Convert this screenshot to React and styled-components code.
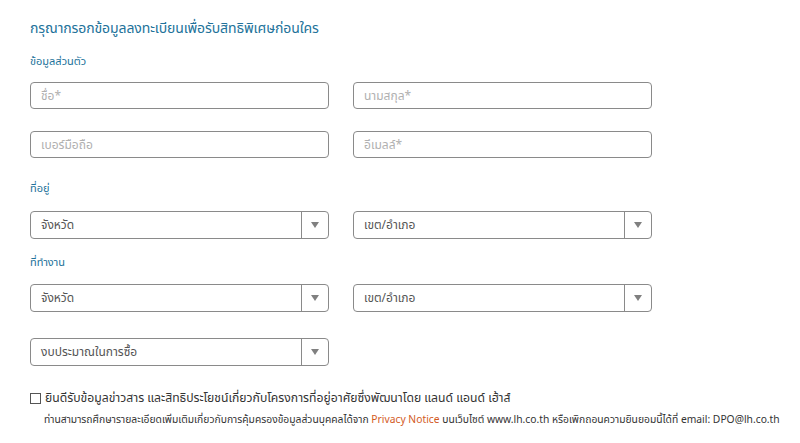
import React from 'react'
import styled, { createGlobalStyle } from 'styled-components'

const GlobalStyle = createGlobalStyle`
  body {
    margin: 0;
    background: #fff;
    font-family: "Noto Sans Thai", "Noto Sans", "Liberation Sans", sans-serif;
  }
`

const Page = styled.div`
  padding: 19px 0 0 30px;
  width: 800px;
  box-sizing: border-box;
`

const Title = styled.h2`
  margin: 0;
  font-size: 14px;
  font-weight: 400;
  color: #22729a;
  line-height: 20px;
  letter-spacing: -0.1px;
`

const SectionLabel = styled.div`
  font-size: 11px;
  color: #22729a;
  line-height: 14px;
  margin: ${(p) => p.$top || 0}px 0 ${(p) => p.$bottom || 0}px;
`

const Row = styled.div`
  display: grid;
  grid-template-columns: 299px 299px;
  column-gap: 24px;
  margin-top: ${(p) => p.$top || 0}px;
`

const Input = styled.div`
  height: 27px;
  box-sizing: border-box;
  border: 1px solid #8a8a8a;
  border-radius: 4px;
  padding: 0 10px;
  display: flex;
  align-items: center;
  font-size: 12px;
  color: #b0b0b0;
`

const SelectBox = styled.div`
  height: 28px;
  box-sizing: border-box;
  border: 1px solid #8a8a8a;
  border-radius: 4px;
  display: flex;
  align-items: stretch;
  font-size: 12px;
  color: #555;
`

const SelectText = styled.div`
  flex: 1;
  display: flex;
  align-items: center;
  padding-left: 10px;
`

const Arrow = styled.div`
  width: 26px;
  border-left: 1px solid #8a8a8a;
  display: flex;
  align-items: center;
  justify-content: center;
  &::after {
    content: '';
    border-left: 4px solid transparent;
    border-right: 4px solid transparent;
    border-top: 6px solid #808080;
  }
`

const Consent = styled.label`
  display: flex;
  align-items: center;
  gap: 4px;
  margin-top: 23px;
  font-size: 12.2px;
  color: #333;
`

const Check = styled.span`
  width: 9px;
  height: 9px;
  border: 1px solid #555;
  background: #fff;
`

const Note = styled.div`
  margin: 5px 0 0 14px;
  font-size: 10.3px;
  color: #333;
  white-space: nowrap;
`

const Link = styled.span`
  color: #d35a1e;
`

const Select = ({ children }) => (
  <SelectBox>
    <SelectText>{children}</SelectText>
    <Arrow />
  </SelectBox>
)

const App = () => (
  <Page>
    <GlobalStyle />
    <Title>กรุณากรอกข้อมูลลงทะเบียนเพื่อรับสิทธิพิเศษก่อนใคร</Title>
    <SectionLabel $top={16} $bottom={13}>ข้อมูลส่วนตัว</SectionLabel>
    <Row>
      <Input>ชื่อ*</Input>
      <Input>นามสกุล*</Input>
    </Row>
    <Row $top={22}>
      <Input>เบอร์มือถือ</Input>
      <Input>อีเมลล์*</Input>
    </Row>
    <SectionLabel $top={24} $bottom={15}>ที่อยู่</SectionLabel>
    <Row>
      <Select>จังหวัด</Select>
      <Select>เขต/อำเภอ</Select>
    </Row>
    <SectionLabel $top={17} $bottom={14}>ที่ทำงาน</SectionLabel>
    <Row>
      <Select>จังหวัด</Select>
      <Select>เขต/อำเภอ</Select>
    </Row>
    <Row $top={26}>
      <Select>งบประมาณในการซื้อ</Select>
    </Row>
    <Consent>
      <Check />
      ยินดีรับข้อมูลข่าวสาร และสิทธิประโยชน์เกี่ยวกับโครงการที่อยู่อาศัยซึ่งพัฒนาโดย แลนด์ แอนด์ เฮ้าส์
    </Consent>
    <Note>
      ท่านสามารถศึกษารายละเอียดเพิ่มเติมเกี่ยวกับการคุ้มครองข้อมูลส่วนบุคคลได้จาก <Link>Privacy Notice</Link> บนเว็บไซต์ www.lh.co.th หรือเพิกถอนความยินยอมนี้ได้ที่ email: DPO@lh.co.th
    </Note>
  </Page>
)

export default App
